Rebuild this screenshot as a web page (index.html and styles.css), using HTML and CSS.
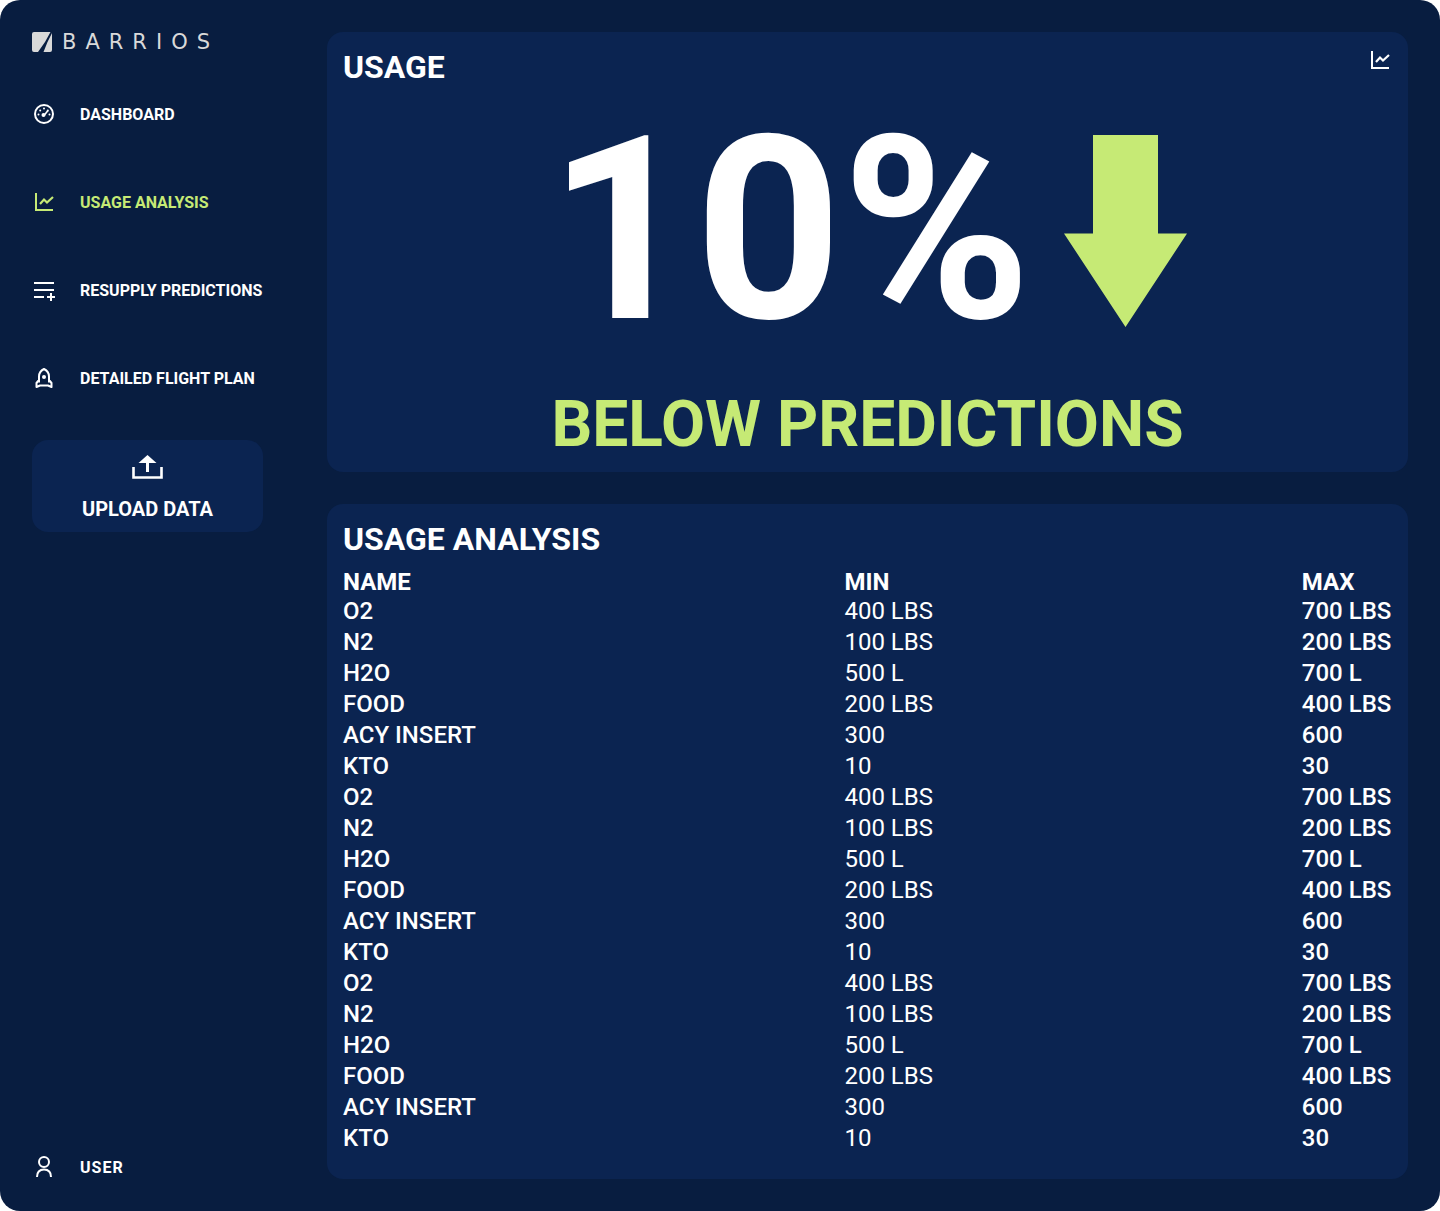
FILE: index.html
```html
<!DOCTYPE html>
<html lang="en">
<head>
<meta charset="utf-8">
<meta name="viewport" content="width=device-width, initial-scale=1">
<title>Barrios – Usage Analysis</title>
<link rel="stylesheet" href="styles.css">
</head>
<body>
<div class="app">
  <aside class="sidebar">
    <a class="logo" href="#">
      <svg class="logo-mark" viewBox="0 0 20 20" aria-hidden="true"><path d="M2 0H18.500L13 10L6 20H2Q0 20 0 18V2Q0 0 2 0ZM20 1V18Q20 20 18 20H11.500L15.500 10Z"/></svg>
      <span class="logo-name">BARRIOS</span>
    </a>
    <nav class="nav">
      <a class="nav-link" href="#">
        <svg class="icon" viewBox="0 0 24 24" aria-hidden="true"><circle cx="12" cy="12" r="9" fill="none" stroke="currentColor" stroke-width="2"/><path d="M12 13.500L16 8.500" stroke="currentColor" stroke-width="1.600"/><circle cx="11.500" cy="13" r="2"/><circle cx="6.500" cy="12.500" r="1"/><circle cx="8.200" cy="8.500" r="1"/><circle cx="12" cy="6.500" r="1"/><circle cx="17.500" cy="12.500" r="1"/><circle cx="15.800" cy="8.500" r="1"/></svg>
        <span>DASHBOARD</span>
      </a>
      <a class="nav-link nav-link-active" href="#" aria-current="page">
        <svg class="icon" viewBox="0 0 24 24" aria-hidden="true"><path d="M4 3V20H21" fill="none" stroke="currentColor" stroke-width="2"/><path d="M8 14L12 9.500L15 12.500L21 7" fill="none" stroke="currentColor" stroke-width="2.200"/></svg>
        <span>USAGE ANALYSIS</span>
      </a>
      <a class="nav-link" href="#">
        <svg class="icon" viewBox="0 0 24 24" aria-hidden="true"><path d="M2 5H22M2 12H22M2 19H12M15 19H23M19 15V23" fill="none" stroke="currentColor" stroke-width="2"/></svg>
        <span>RESUPPLY PREDICTIONS</span>
      </a>
      <a class="nav-link" href="#">
        <svg class="icon" viewBox="0 0 24 24" aria-hidden="true"><path d="M7 16.500V10.500Q7 5.500 12 3Q17 5.500 17 10.500V16.500M7 14L4.500 17V21L8 19.500H16L19.500 21V17L17 14" fill="none" stroke="currentColor" stroke-width="2" stroke-linejoin="round"/><circle cx="12" cy="11" r="2"/></svg>
        <span>DETAILED FLIGHT PLAN</span>
      </a>
    </nav>
    <button class="upload" type="button">
      <svg class="upload-icon" viewBox="0 0 31 26" aria-hidden="true"><path d="M1.500 13V23.500H29.500V13" fill="none" stroke="currentColor" stroke-width="2.600"/><path d="M15.500 1L24.500 9H17V18H14V9H6.500Z"/></svg>
      <span>UPLOAD DATA</span>
    </button>
    <a class="nav-link user" href="#">
      <svg class="icon" viewBox="0 0 24 24" aria-hidden="true"><circle cx="12" cy="7" r="5" fill="none" stroke="currentColor" stroke-width="2"/><path d="M5 22Q5 14.500 12 14.500Q19 14.500 19 22" fill="none" stroke="currentColor" stroke-width="2"/></svg>
      <span>USER</span>
    </a>
  </aside>
  <main class="main">
    <section class="card">
      <header class="card-header">
        <h1 class="card-title">USAGE</h1>
        <svg class="icon" viewBox="0 0 24 24" aria-hidden="true"><path d="M4 3V20H21" fill="none" stroke="currentColor" stroke-width="2"/><path d="M8 14L12 9.500L15 12.500L21 7" fill="none" stroke="currentColor" stroke-width="2.200"/></svg>
      </header>
      <div class="hero">
        <span class="hero-value">10%</span>
        <svg class="hero-arrow" viewBox="0 0 124 192" aria-hidden="true"><path d="M30 0H95V98.500H124L62.500 192L1 98.500H30Z"/></svg>
      </div>
      <p class="hero-caption">BELOW PREDICTIONS</p>
    </section>
    <section class="card card-table">
      <h2 class="card-title">USAGE ANALYSIS</h2>
      <table class="usage">
        <thead><tr><th scope="col">NAME</th><th scope="col">MIN</th><th scope="col">MAX</th></tr></thead>
        <tbody>
          <tr><th scope="row">O2</th><td>400 LBS</td><td>700 LBS</td></tr>
          <tr><th scope="row">N2</th><td>100 LBS</td><td>200 LBS</td></tr>
          <tr><th scope="row">H2O</th><td>500 L</td><td>700 L</td></tr>
          <tr><th scope="row">FOOD</th><td>200 LBS</td><td>400 LBS</td></tr>
          <tr><th scope="row">ACY INSERT</th><td>300</td><td>600</td></tr>
          <tr><th scope="row">KTO</th><td>10</td><td>30</td></tr>
          <tr><th scope="row">O2</th><td>400 LBS</td><td>700 LBS</td></tr>
          <tr><th scope="row">N2</th><td>100 LBS</td><td>200 LBS</td></tr>
          <tr><th scope="row">H2O</th><td>500 L</td><td>700 L</td></tr>
          <tr><th scope="row">FOOD</th><td>200 LBS</td><td>400 LBS</td></tr>
          <tr><th scope="row">ACY INSERT</th><td>300</td><td>600</td></tr>
          <tr><th scope="row">KTO</th><td>10</td><td>30</td></tr>
          <tr><th scope="row">O2</th><td>400 LBS</td><td>700 LBS</td></tr>
          <tr><th scope="row">N2</th><td>100 LBS</td><td>200 LBS</td></tr>
          <tr><th scope="row">H2O</th><td>500 L</td><td>700 L</td></tr>
          <tr><th scope="row">FOOD</th><td>200 LBS</td><td>400 LBS</td></tr>
          <tr><th scope="row">ACY INSERT</th><td>300</td><td>600</td></tr>
          <tr><th scope="row">KTO</th><td>10</td><td>30</td></tr>
        </tbody>
      </table>
    </section>
  </main>
</div>
</body>
</html>
```
FILE: styles.css
```css
:root {
  --page: #081d40;
  --panel: #0b2451;
  --accent: #c6ea75;
  --logo: #d9d9d9;
}

* {
  box-sizing: border-box;
}

body {
  margin: 0;
  background: #fff;
  color: #fff;
  font-family: Roboto, "Liberation Sans", sans-serif;
}

svg {
  display: block;
  flex: none;
  fill: currentColor;
}

.app {
  display: flex;
  gap: 64px;
  min-height: 100vh;
  padding: 32px;
  background: var(--page);
  border-radius: 20px;
}

.sidebar {
  display: flex;
  flex: none;
  flex-direction: column;
  width: 231px;
}

.logo {
  display: flex;
  align-items: center;
  gap: 10px;
  height: 20px;
  color: var(--logo);
  text-decoration: none;
}

.logo-mark {
  width: 20px;
  height: 20px;
}

.logo-name {
  font: 21px/20px "DejaVu Sans", sans-serif;
  letter-spacing: 9px;
}

.nav {
  display: flex;
  flex-direction: column;
  gap: 64px;
  margin: 50px 0;
}

.nav-link {
  display: flex;
  align-items: flex-start;
  gap: 24px;
  height: 24px;
  color: #fff;
  font-size: 16px;
  font-weight: 700;
  line-height: 26px;
  text-decoration: none;
  white-space: nowrap;
}

.nav-link-active {
  color: var(--accent);
}

.icon {
  width: 24px;
  height: 24px;
}

.upload {
  display: flex;
  flex-direction: column;
  align-items: center;
  gap: 16px;
  padding: 14px 16px 10px;
  border: 0;
  border-radius: 16px;
  background: var(--panel);
  color: #fff;
  font: 700 20px/26px Roboto, "Liberation Sans", sans-serif;
}

.upload-icon {
  width: 31px;
  height: 26px;
}

.user {
  margin-top: auto;
  letter-spacing: 1px;
}

.main {
  display: flex;
  flex: 1;
  flex-direction: column;
  gap: 32px;
  min-width: 0;
}

.card {
  padding: 16px 16px 10px;
  border-radius: 16px;
  background: var(--panel);
}

.card-table {
  flex: 1;
}

.card-header {
  display: flex;
  justify-content: space-between;
}

.card-title {
  margin: 0;
  font-size: 32px;
  font-weight: 700;
  line-height: 38px;
}

.hero {
  display: flex;
  align-items: center;
  justify-content: center;
  gap: 32px;
}

.hero-value {
  font-size: 256px;
  font-weight: 700;
  line-height: 290px;
}

.hero-arrow {
  width: 124px;
  height: 192px;
  color: var(--accent);
}

.hero-caption {
  margin: 11px 0 0;
  color: var(--accent);
  font-size: 64px;
  font-weight: 700;
  line-height: 75px;
  text-align: center;
}

.usage {
  width: 100%;
  margin-top: 10px;
  border-collapse: collapse;
  font-size: 24px;
  line-height: 31px;
  text-align: left;
  white-space: nowrap;
}

.usage th,
.usage td {
  padding: 0;
  font-weight: 400;
}

.usage thead th {
  font-weight: 700;
  line-height: 28px;
}

.usage thead th:nth-child(1) {
  width: 47.8%;
}

.usage thead th:nth-child(2) {
  width: 43.6%;
}

.usage tbody th,
.usage td:last-child {
  font-weight: 500;
}
```
